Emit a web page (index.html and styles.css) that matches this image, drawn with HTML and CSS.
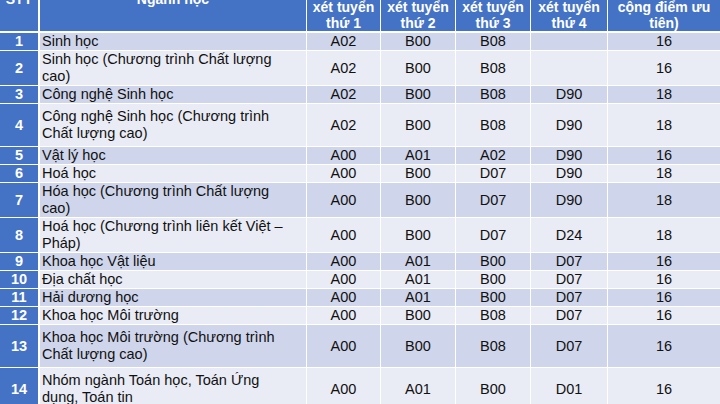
FILE: index.html
```html
<!DOCTYPE html>
<html lang="vi">
<head>
<meta charset="utf-8">
<title>Ngành học</title>
<link rel="stylesheet" href="styles.css">
</head>
<body>
<div class="viewport">
<table class="grid">
  <colgroup>
    <col class="c-stt"><col class="c-name"><col class="c-a"><col class="c-b"><col class="c-c"><col class="c-d"><col class="c-score">
  </colgroup>
  <thead>
    <tr class="head">
      <th>STT</th>
      <th>Ngành học</th>
      <th>Tổ hợp<br>môn<br>xét tuyển<br>thứ 1</th>
      <th>Tổ hợp<br>môn<br>xét tuyển<br>thứ 2</th>
      <th>Tổ hợp<br>môn<br>xét tuyển<br>thứ 3</th>
      <th>Tổ hợp<br>môn<br>xét tuyển<br>thứ 4</th>
      <th>Điểm sàn<br>(chưa<br>cộng điểm ưu<br>tiên)</th>
    </tr>
  </thead>
  <tbody>
    <tr class="one dark"><td>1</td><td>Sinh học</td><td>A02</td><td>B00</td><td>B08</td><td></td><td>16</td></tr>
    <tr class="two light"><td>2</td><td>Sinh học (Chương trình Chất lượng cao)</td><td>A02</td><td>B00</td><td>B08</td><td></td><td>16</td></tr>
    <tr class="one dark"><td>3</td><td>Công nghệ Sinh học</td><td>A02</td><td>B00</td><td>B08</td><td>D90</td><td>18</td></tr>
    <tr class="tall light"><td>4</td><td>Công nghệ Sinh học (Chương trình Chất lượng cao)</td><td>A02</td><td>B00</td><td>B08</td><td>D90</td><td>18</td></tr>
    <tr class="one dark"><td>5</td><td>Vật lý học</td><td>A00</td><td>A01</td><td>A02</td><td>D90</td><td>16</td></tr>
    <tr class="one light"><td>6</td><td>Hoá học</td><td>A00</td><td>B00</td><td>D07</td><td>D90</td><td>18</td></tr>
    <tr class="two dark"><td>7</td><td>Hóa học (Chương trình Chất lượng cao)</td><td>A00</td><td>B00</td><td>D07</td><td>D90</td><td>18</td></tr>
    <tr class="two light"><td>8</td><td>Hoá học (Chương trình liên kết Việt – Pháp)</td><td>A00</td><td>B00</td><td>D07</td><td>D24</td><td>18</td></tr>
    <tr class="one dark"><td>9</td><td>Khoa học Vật liệu</td><td>A00</td><td>A01</td><td>B00</td><td>D07</td><td>16</td></tr>
    <tr class="one light"><td>10</td><td>Địa chất học</td><td>A00</td><td>A01</td><td>B00</td><td>D07</td><td>16</td></tr>
    <tr class="one-b dark"><td>11</td><td>Hải dương học</td><td>A00</td><td>A01</td><td>B00</td><td>D07</td><td>16</td></tr>
    <tr class="one-b light"><td>12</td><td>Khoa học Môi trường</td><td>A00</td><td>B00</td><td>B08</td><td>D07</td><td>16</td></tr>
    <tr class="tall dark"><td>13</td><td>Khoa học Môi trường (Chương trình Chất lượng cao)</td><td>A00</td><td>B00</td><td>B08</td><td>D07</td><td>16</td></tr>
    <tr class="tall light"><td>14</td><td>Nhóm ngành Toán học, Toán Ứng dụng, Toán tin</td><td>A00</td><td>A01</td><td>B00</td><td>D01</td><td>16</td></tr>
  </tbody>
</table>
</div>
</body>
</html>
```

FILE: styles.css
```css
html, body {
  margin: 0;
  padding: 0;
  background: #ffffff;
}

.viewport {
  width: 720px;
  height: 404px;
  overflow: hidden;
}

.grid {
  margin-top: -33px;
  width: 720px;
  table-layout: fixed;
  border-collapse: separate;
  border-spacing: 0;
  font-family: "Liberation Sans", Arial, sans-serif;
  font-size: 14.5px;
  line-height: 17px;
  color: #111111;
}

.c-stt { width: 39px; }
.c-name { width: 267px; }
.c-a { width: 74px; }
.c-b { width: 75px; }
.c-c { width: 75px; }
.c-d { width: 77px; }
.c-score { width: 113px; }

.grid th,
.grid td {
  padding: 0;
  text-align: center;
  vertical-align: middle;
  border-bottom: 1px solid #ffffff;
  border-left: 1px solid #ffffff;
  overflow: hidden;
}

.grid th:first-child,
.grid td:first-child {
  border-left: 0;
  border-right: 1px solid #ffffff;
}

.head {
  height: 64px;
}

.grid th {
  background: #4472c4;
  color: #ffffff;
  font-weight: bold;
  font-size: 14px;
  line-height: 16px;
  border-bottom: 2px solid #ffffff;
}

.grid td:first-child {
  background: #4472c4;
  color: #ffffff;
  font-weight: bold;
}

.grid td:nth-child(2) {
  text-align: left;
  padding-left: 2px;
  padding-right: 14px;
}

.one { height: 16px; }
.one-b { height: 17px; }
.two { height: 35px; }
.tall { height: 43px; }

.dark td { background: #cfd5ea; }
.light td { background: #e9ebf5; }
```
